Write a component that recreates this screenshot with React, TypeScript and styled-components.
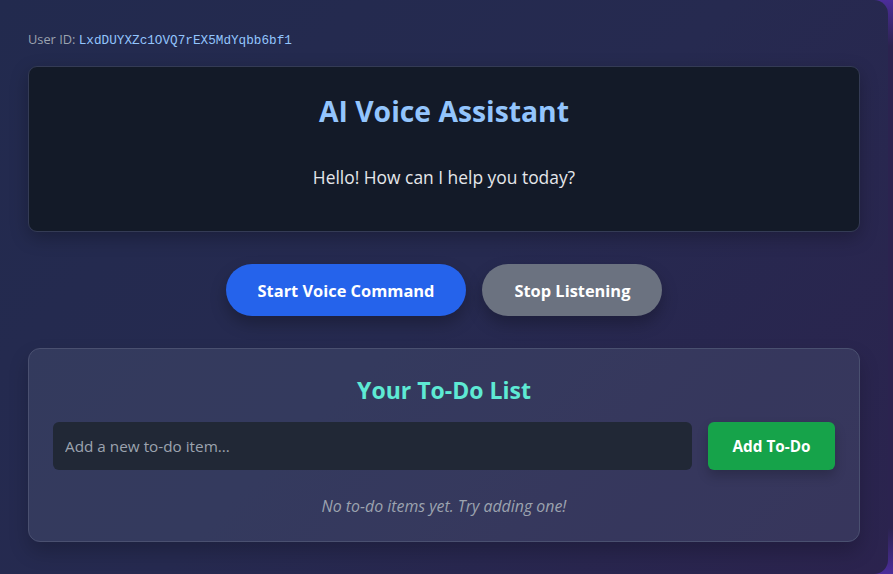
import React, { useState } from "react";
import styled, { createGlobalStyle } from "styled-components";

const Global = createGlobalStyle`
  * { box-sizing: border-box; }
  html, body { margin: 0; padding: 0; }
  body {
    background: linear-gradient(180deg, #4b2d9a 0%, #2b234f 8%, #2b234f 92%, #4b2d9a 100%);
    font-family: "Open Sans", "Noto Sans", sans-serif;
    width: 893px;
    height: 574px;
    overflow: hidden;
  }
`;

const Page = styled.div`
  width: 888px;
  height: 574px;
  border-radius: 0 14px 14px 0;
  background: linear-gradient(135deg, #222a4e 0%, #262a50 50%, #2b234e 100%);
  padding: 31px 28px 0 28px;
  display: flex;
  flex-direction: column;
`;

const UserLine = styled.div`
  font-size: 12.8px;
  line-height: 16px;
  color: #9ca3af;
  margin-bottom: 17px;
`;

const Mono = styled.span`
  font-family: "Liberation Mono", "DejaVu Sans Mono", monospace;
  font-size: 12.7px;
  color: #93c5fd;
`;

const Card = styled.section`
  width: 832px;
  height: 166px;
  background: #131a28;
  border: 1px solid #343b55;
  border-radius: 9px;
  display: flex;
  flex-direction: column;
  align-items: center;
  padding-top: 26px;
  box-shadow: 0 6px 18px rgba(0, 0, 0, 0.25);
`;

const Title = styled.h1`
  margin: 0;
  font-size: 28.3px;
  line-height: 36px;
  font-weight: 700;
  color: #93c5fd;
`;

const Response = styled.p`
  margin: 34px 0 0 0;
  font-size: 17.4px;
  line-height: 28px;
  color: #e5e7eb;
`;

const Controls = styled.div`
  display: flex;
  justify-content: center;
  gap: 16px;
  margin-top: 32px;
`;

const PillButton = styled.button<{ $variant: "primary" | "muted" }>`
  height: 52px;
  padding: 0 32px;
  border: none;
  border-radius: 26px;
  font-family: inherit;
  font-size: 16.4px;
  font-weight: 700;
  color: #ffffff;
  background: ${(p) => (p.$variant === "primary" ? "#2563eb" : "#6b7280")};
  box-shadow: 0 8px 16px rgba(0, 0, 0, 0.25);
  cursor: pointer;
`;

const TodoCard = styled.section`
  width: 832px;
  height: 194px;
  margin-top: 32px;
  background: rgba(70, 78, 110, 0.45);
  border: 1px solid #4a5070;
  border-radius: 12px;
  padding: 25px 24px 0 24px;
  display: flex;
  flex-direction: column;
  box-shadow: 0 10px 20px rgba(0, 0, 0, 0.2);
`;

const TodoTitle = styled.h2`
  margin: 0 0 16px 0;
  text-align: center;
  font-size: 23px;
  line-height: 32px;
  font-weight: 700;
  color: #5eead4;
`;

const InputRow = styled.div`
  display: flex;
  gap: 16px;
`;

const TodoInput = styled.input`
  flex: 1;
  height: 48px;
  border: none;
  border-radius: 6px;
  background: #212836;
  padding: 0 12px;
  font-family: inherit;
  font-size: 15.3px;
  color: #e5e7eb;
  outline: none;
  &::placeholder { color: #9ca3af; }
`;

const AddButton = styled.button`
  width: 127px;
  height: 48px;
  border: none;
  border-radius: 6px;
  background: #16a34a;
  color: #ffffff;
  font-family: inherit;
  font-size: 15.3px;
  font-weight: 700;
  box-shadow: 0 6px 12px rgba(0, 0, 0, 0.2);
`;

const Empty = styled.p`
  margin: 24px 0 0 0;
  text-align: center;
  font-size: 15.9px;
  line-height: 24px;
  font-style: italic;
  color: #9ca3af;
`;

export default function App() {
  const [value, setValue] = useState("");
  return (
    <>
      <Global />
      <Page>
        <UserLine>
          User ID: <Mono>LxdDUYXZc1OVQ7rEX5MdYqbb6bf1</Mono>
        </UserLine>
        <Card>
          <Title>AI Voice Assistant</Title>
          <Response>Hello! How can I help you today?</Response>
        </Card>
        <Controls>
          <PillButton $variant="primary">Start Voice Command</PillButton>
          <PillButton $variant="muted">Stop Listening</PillButton>
        </Controls>
        <TodoCard>
          <TodoTitle>Your To-Do List</TodoTitle>
          <InputRow>
            <TodoInput
              placeholder="Add a new to-do item..."
              value={value}
              onChange={(e) => setValue(e.target.value)}
            />
            <AddButton>Add To-Do</AddButton>
          </InputRow>
          <Empty>No to-do items yet. Try adding one!</Empty>
        </TodoCard>
      </Page>
    </>
  );
}
